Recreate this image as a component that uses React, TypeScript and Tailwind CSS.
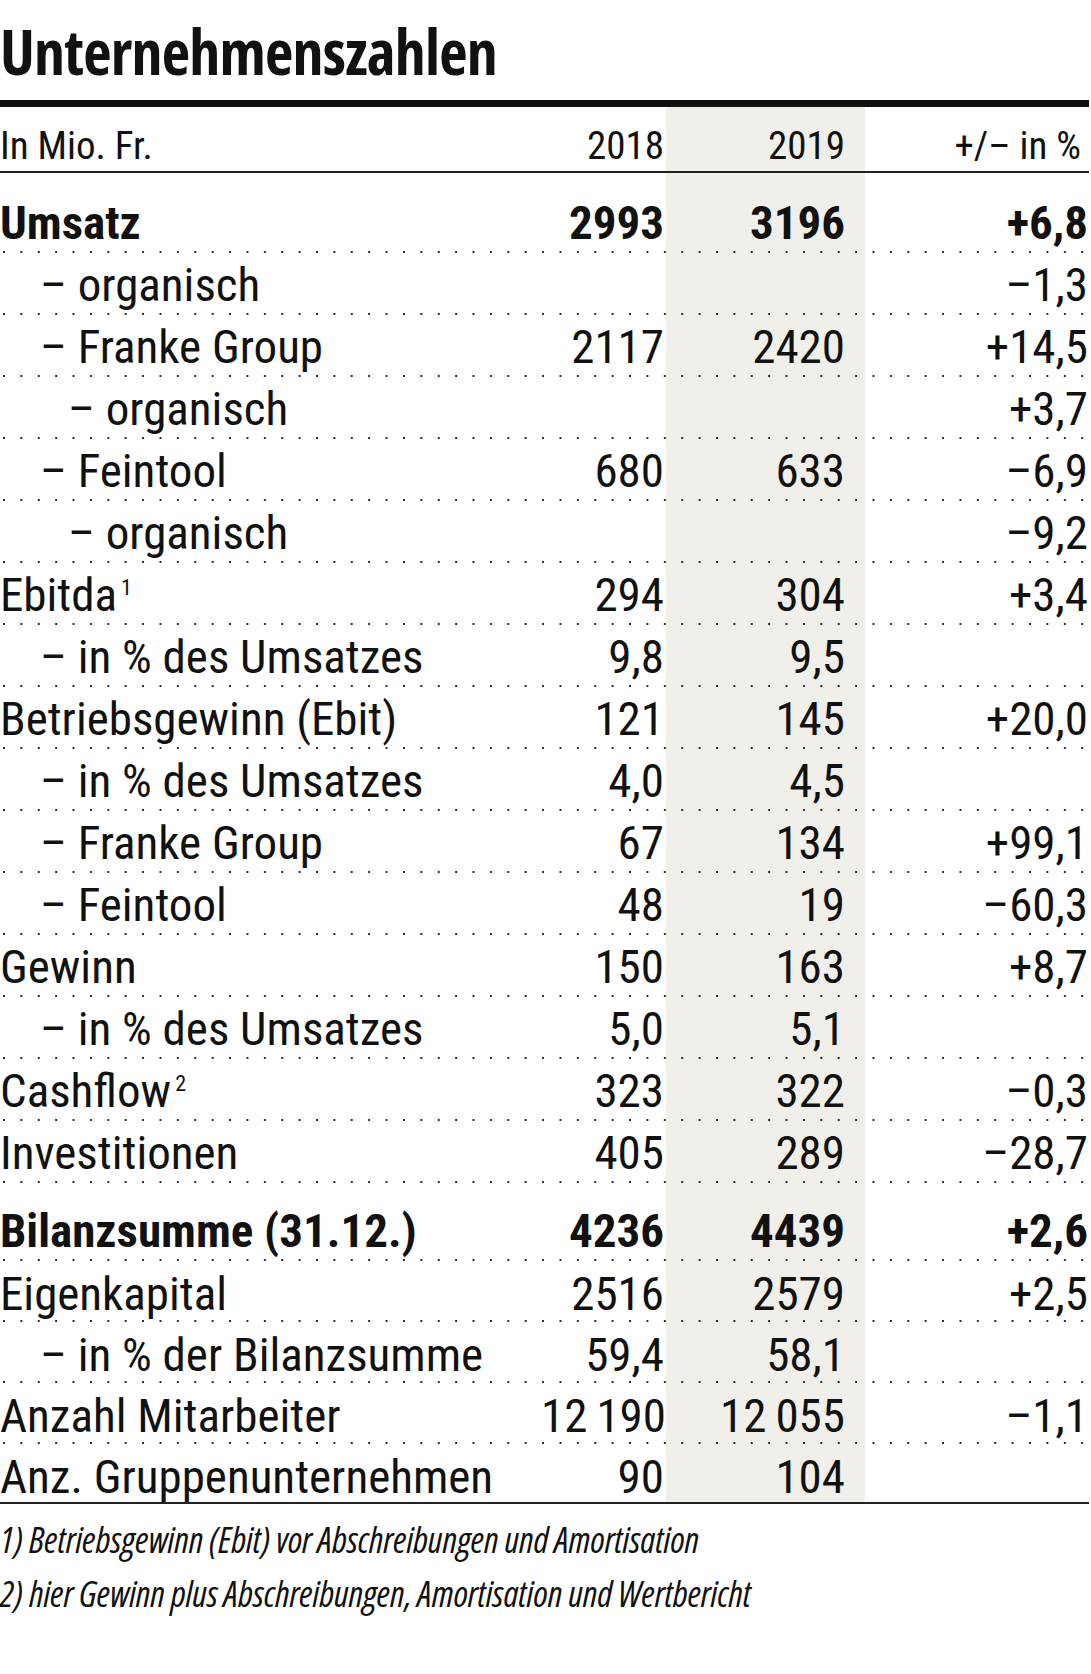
type Row = {
  label: string;
  indent?: 0 | 1 | 2;
  y2018?: string;
  y2019?: string;
  pct?: string;
  bold?: boolean;
  sup?: string;
  h: string;
};

const ROWS: Row[] = [
  { label: 'Umsatz', y2018: '2993', y2019: '3196', pct: '+6,8', bold: true, h: 'h-[78px] pt-[20px]' },
  { label: '– organisch', indent: 1, pct: '–1,3', h: 'h-[60px] pt-[2px]' },
  { label: '– Franke Group', indent: 1, y2018: '2117', y2019: '2420', pct: '+14,5', h: 'h-[60px] pt-[2px]' },
  { label: '– organisch', indent: 2, pct: '+3,7', h: 'h-[60px] pt-[2px]' },
  { label: '– Feintool', indent: 1, y2018: '680', y2019: '633', pct: '–6,9', h: 'h-[60px] pt-[2px]' },
  { label: '– organisch', indent: 2, pct: '–9,2', h: 'h-[60px] pt-[2px]' },
  { label: 'Ebitda', sup: '1', y2018: '294', y2019: '304', pct: '+3,4', h: 'h-[60px] pt-[2px]' },
  { label: '– in % des Umsatzes', indent: 1, y2018: '9,8', y2019: '9,5', h: 'h-[60px] pt-[2px]' },
  { label: 'Betriebsgewinn (Ebit)', y2018: '121', y2019: '145', pct: '+20,0', h: 'h-[60px] pt-[2px]' },
  { label: '– in % des Umsatzes', indent: 1, y2018: '4,0', y2019: '4,5', h: 'h-[60px] pt-[2px]' },
  { label: '– Franke Group', indent: 1, y2018: '67', y2019: '134', pct: '+99,1', h: 'h-[60px] pt-[2px]' },
  { label: '– Feintool', indent: 1, y2018: '48', y2019: '19', pct: '–60,3', h: 'h-[60px] pt-[2px]' },
  { label: 'Gewinn', y2018: '150', y2019: '163', pct: '+8,7', h: 'h-[60px] pt-[2px]' },
  { label: '– in % des Umsatzes', indent: 1, y2018: '5,0', y2019: '5,1', h: 'h-[60px] pt-[2px]' },
  { label: 'Cashflow', sup: '2', y2018: '323', y2019: '322', pct: '–0,3', h: 'h-[60px] pt-[2px]' },
  { label: 'Investitionen', y2018: '405', y2019: '289', pct: '–28,7', h: 'h-[60px] pt-[2px]' },
  { label: 'Bilanzsumme (31.12.)', y2018: '4236', y2019: '4439', pct: '+2,6', bold: true, h: 'h-[76px] pt-[18px]' },
  { label: 'Eigenkapital', y2018: '2516', y2019: '2579', pct: '+2,5', h: 'h-[59px] pt-[3px]' },
  { label: '– in % der Bilanzsumme', indent: 1, y2018: '59,4', y2019: '58,1', h: 'h-[59px] pt-[3px]' },
  { label: 'Anzahl Mitarbeiter', y2018: '12\u2009190', y2019: '12\u2009055', pct: '–1,1', h: 'h-[59px] pt-[3px]' },
  { label: 'Anz. Gruppenunternehmen', y2018: '90', y2019: '104', h: 'h-[58px] pt-[3px]' },
];

const INDENT = ['pl-0', 'pl-[40px]', 'pl-[68px]'];

function Dots() {
  return (
    <div className="h-[2px] bg-[linear-gradient(to_right,#2a2a2a_2px,transparent_2px)] bg-[length:17.4px_2px] bg-[position:3px_0]" />
  );
}

function TableRow({ row }: { row: Row }) {
  return (
    <div
      className={`grid grid-cols-[541px_125px_199px_224px] leading-[60px] whitespace-nowrap ${row.h} ${
        row.bold ? 'font-bold' : ''
      }`}
    >
      <div className={INDENT[row.indent ?? 0]}>
        {row.label}
        {row.sup && <span className="ml-[4px] text-[22px] leading-none align-[16px]">{row.sup}</span>}
      </div>
      <div className="pr-[2px] text-right">{row.y2018}</div>
      <div className="pr-[20px] text-right">{row.y2019}</div>
      <div className="pr-[1px] text-right">{row.pct}</div>
    </div>
  );
}

export default function App() {
  return (
    <div className="h-[1674px] w-[1091px] bg-white font-['Roboto_Condensed','Open_Sans',sans-serif] text-[#111]">
      <div className="w-[1089px]">
        <h1 className="h-[100px] pt-[20px] font-['Open_Sans',sans-serif] text-[62px] leading-[62px] font-bold tracking-[-0.8px] [font-stretch:75%]">
          Unternehmenszahlen
        </h1>
        <div className="h-[7px] bg-[#111]" />

        <div className="bg-[linear-gradient(to_right,transparent_666px,#f0efea_666px,#f0efea_865px,transparent_865px)] text-[47px]">
          <div className="grid h-[64px] grid-cols-[541px_125px_199px_224px] pt-[10px] text-[39px] leading-[58px] whitespace-nowrap">
            <div>In Mio. Fr.</div>
            <div className="pr-[2px] text-right">2018</div>
            <div className="pr-[20px] text-right">2019</div>
            <div className="pr-[8px] text-right">+/– in %</div>
          </div>
          <div className="h-[2px] bg-[#222]" />

          {ROWS.map((row, i) => (
            <div key={i}>
              <TableRow row={row} />
              {i < ROWS.length - 1 && <Dots />}
            </div>
          ))}
        </div>
        <div className="h-[2px] bg-[#222]" />

        <div className="pt-[9px] font-['Open_Sans',sans-serif] text-[36px] leading-[54px] italic tracking-[-0.1px] [font-stretch:75%]">
          <p>1) Betriebsgewinn (Ebit) vor Abschreibungen und Amortisation</p>
          <p>2) hier Gewinn plus Abschreibungen, Amortisation und Wertbericht</p>
        </div>
      </div>
    </div>
  );
}
